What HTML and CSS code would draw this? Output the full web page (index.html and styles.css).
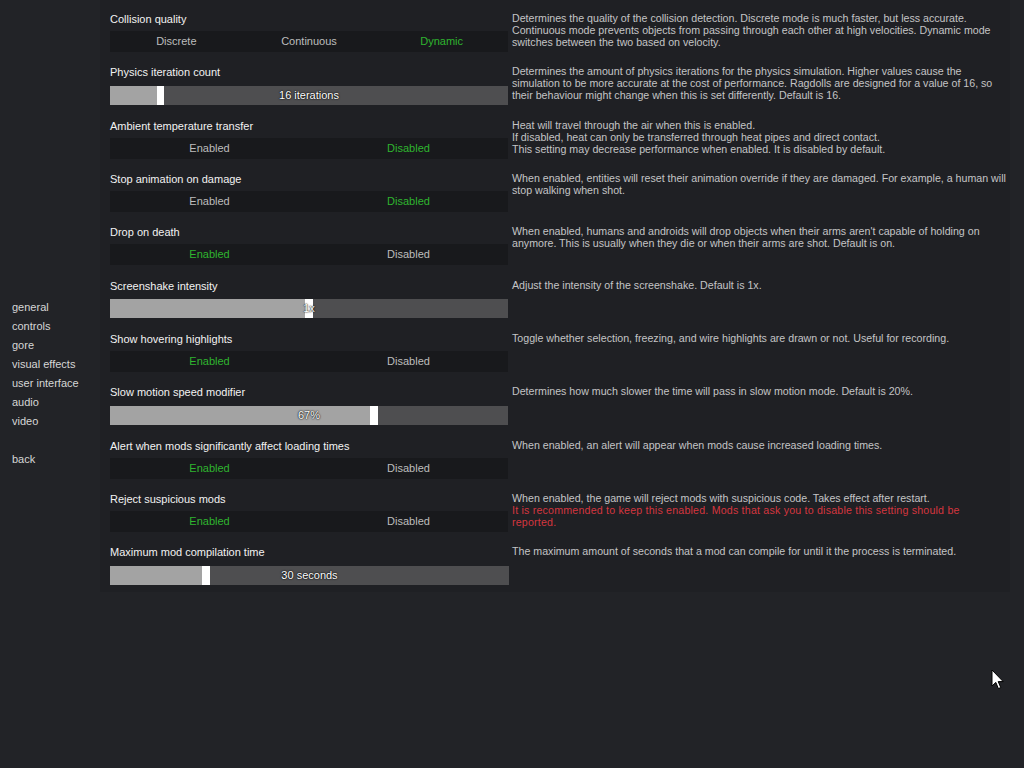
FILE: index.html
```html
<!DOCTYPE html>
<html>
<head>
<meta charset="utf-8">
<link rel="stylesheet" href="styles.css">
</head>
<body>
<div class="page">
  <nav class="menu">
    <div class="item">general</div>
    <div class="item">controls</div>
    <div class="item">gore</div>
    <div class="item">visual effects</div>
    <div class="item">user interface</div>
    <div class="item">audio</div>
    <div class="item">video</div>
    <div class="item back">back</div>
  </nav>
  <main class="panel">
    <div class="row">
      <div class="setting">
        <div class="label">Collision quality</div>
        <div class="buttons"><span class="btn">Discrete</span><span class="btn">Continuous</span><span class="btn on">Dynamic</span></div>
      </div>
      <div class="desc">Determines the quality of the collision detection. Discrete mode is much faster, but less accurate.<br>Continuous mode prevents objects from passing through each other at high velocities. Dynamic mode<br>switches between the two based on velocity.</div>
    </div>
    <div class="row">
      <div class="setting">
        <div class="label">Physics iteration count</div>
        <div class="slider"><div class="fill" style="width:47px"></div><div class="handle"></div><span class="val">16 iterations</span></div>
      </div>
      <div class="desc">Determines the amount of physics iterations for the physics simulation. Higher values cause the<br>simulation to be more accurate at the cost of performance. Ragdolls are designed for a value of 16, so<br>their behaviour might change when this is set differently. Default is 16.</div>
    </div>
    <div class="row">
      <div class="setting">
        <div class="label">Ambient temperature transfer</div>
        <div class="buttons"><span class="btn">Enabled</span><span class="btn on">Disabled</span></div>
      </div>
      <div class="desc">Heat will travel through the air when this is enabled.<br>If disabled, heat can only be transferred through heat pipes and direct contact.<br>This setting may decrease performance when enabled. It is disabled by default.</div>
    </div>
    <div class="row">
      <div class="setting">
        <div class="label">Stop animation on damage</div>
        <div class="buttons"><span class="btn">Enabled</span><span class="btn on">Disabled</span></div>
      </div>
      <div class="desc">When enabled, entities will reset their animation override if they are damaged. For example, a human will<br>stop walking when shot.</div>
    </div>
    <div class="row">
      <div class="setting">
        <div class="label">Drop on death</div>
        <div class="buttons"><span class="btn on">Enabled</span><span class="btn">Disabled</span></div>
      </div>
      <div class="desc">When enabled, humans and androids will drop objects when their arms aren't capable of holding on<br>anymore. This is usually when they die or when their arms are shot. Default is on.</div>
    </div>
    <div class="row">
      <div class="setting">
        <div class="label">Screenshake intensity</div>
        <div class="slider"><div class="fill" style="width:195px"></div><div class="handle wide"></div><span class="val">1x</span></div>
      </div>
      <div class="desc">Adjust the intensity of the screenshake. Default is 1x.</div>
    </div>
    <div class="row">
      <div class="setting">
        <div class="label">Show hovering highlights</div>
        <div class="buttons"><span class="btn on">Enabled</span><span class="btn">Disabled</span></div>
      </div>
      <div class="desc">Toggle whether selection, freezing, and wire highlights are drawn or not. Useful for recording.</div>
    </div>
    <div class="row">
      <div class="setting">
        <div class="label">Slow motion speed modifier</div>
        <div class="slider"><div class="fill" style="width:260px"></div><div class="handle wide"></div><span class="val">67%</span></div>
      </div>
      <div class="desc">Determines how much slower the time will pass in slow motion mode. Default is 20%.</div>
    </div>
    <div class="row">
      <div class="setting">
        <div class="label">Alert when mods significantly affect loading times</div>
        <div class="buttons"><span class="btn on">Enabled</span><span class="btn">Disabled</span></div>
      </div>
      <div class="desc">When enabled, an alert will appear when mods cause increased loading times.</div>
    </div>
    <div class="row">
      <div class="setting">
        <div class="label">Reject suspicious mods</div>
        <div class="buttons"><span class="btn on">Enabled</span><span class="btn">Disabled</span></div>
      </div>
      <div class="desc">When enabled, the game will reject mods with suspicious code. Takes effect after restart.<br><span class="warn">It is recommended to keep this enabled. Mods that ask you to disable this setting should be<br>reported.</span></div>
    </div>
    <div class="row">
      <div class="setting">
        <div class="label">Maximum mod compilation time</div>
        <div class="slider long"><div class="fill" style="width:92px"></div><div class="handle wide"></div><span class="val">30 seconds</span></div>
      </div>
      <div class="desc">The maximum amount of seconds that a mod can compile for until it the process is terminated.</div>
    </div>
  </main>
</div>
<svg class="cursor" width="14" height="22" viewBox="0 0 14 22"><path d="M1 1 L1 17 L4.8 13.4 L7.4 19.6 L9.8 18.6 L7.2 12.6 L12.2 12.6 Z" fill="#ffffff" stroke="#000000" stroke-width="1" stroke-linejoin="round"/></svg>
</body>
</html>
```

FILE: styles.css
```css
html, body {
  margin: 0;
  padding: 0;
  background: #222327;
  width: 1024px;
  height: 768px;
  overflow: hidden;
  font-family: "Liberation Sans", Arial, sans-serif;
}
.page {
  display: flex;
  align-items: flex-start;
}
.menu {
  width: 100px;
  padding-top: 298px;
  padding-left: 12px;
  box-sizing: border-box;
  flex: none;
}
.menu .item {
  font-size: 11px;
  line-height: 19px;
  height: 19px;
  color: #d6d6d6;
}
.menu .back {
  margin-top: 19px;
}
.panel {
  width: 910px;
  height: 592px;
  background: #1f2024;
  padding: 10px 0 0 10px;
  box-sizing: border-box;
  flex: none;
}
.row {
  display: grid;
  grid-template-columns: 398px 1fr;
  column-gap: 4px;
  height: 53.333px;
}
.setting {
  display: flex;
  flex-direction: column;
}
.label {
  font-size: 11px;
  line-height: 18px;
  height: 21px;
  color: #f2f2f2;
}
.buttons {
  display: flex;
  height: 21px;
  background: #18191c;
}
.btn {
  flex: 1;
  text-align: center;
  font-size: 11px;
  line-height: 21px;
  color: #bdbdbd;
}
.btn.on {
  color: #2fb52f;
}
.slider {
  position: relative;
  display: flex;
  height: 19px;
  margin-top: 1.5px;
  background: #4e4e50;
}
.slider.long {
  width: 399px;
}
.fill {
  height: 100%;
  background: #a3a3a3;
}
.handle {
  width: 7px;
  height: 100%;
  background: #ffffff;
}
.handle.wide {
  width: 8px;
}
.val {
  position: absolute;
  left: 0;
  right: 0;
  top: 0;
  text-align: center;
  font-size: 11px;
  line-height: 19px;
  color: #ffffff;
  text-shadow: 0 0 1px #000, 0 0 2px #000;
}
.desc {
  padding-top: 2px;
  font-size: 10.65px;
  line-height: 12px;
  color: #c4c4c6;
  white-space: nowrap;
}
.warn {
  color: #d4363f;
  letter-spacing: 0.2px;
}
.cursor {
  position: absolute;
  left: 991px;
  top: 669px;
}
```
